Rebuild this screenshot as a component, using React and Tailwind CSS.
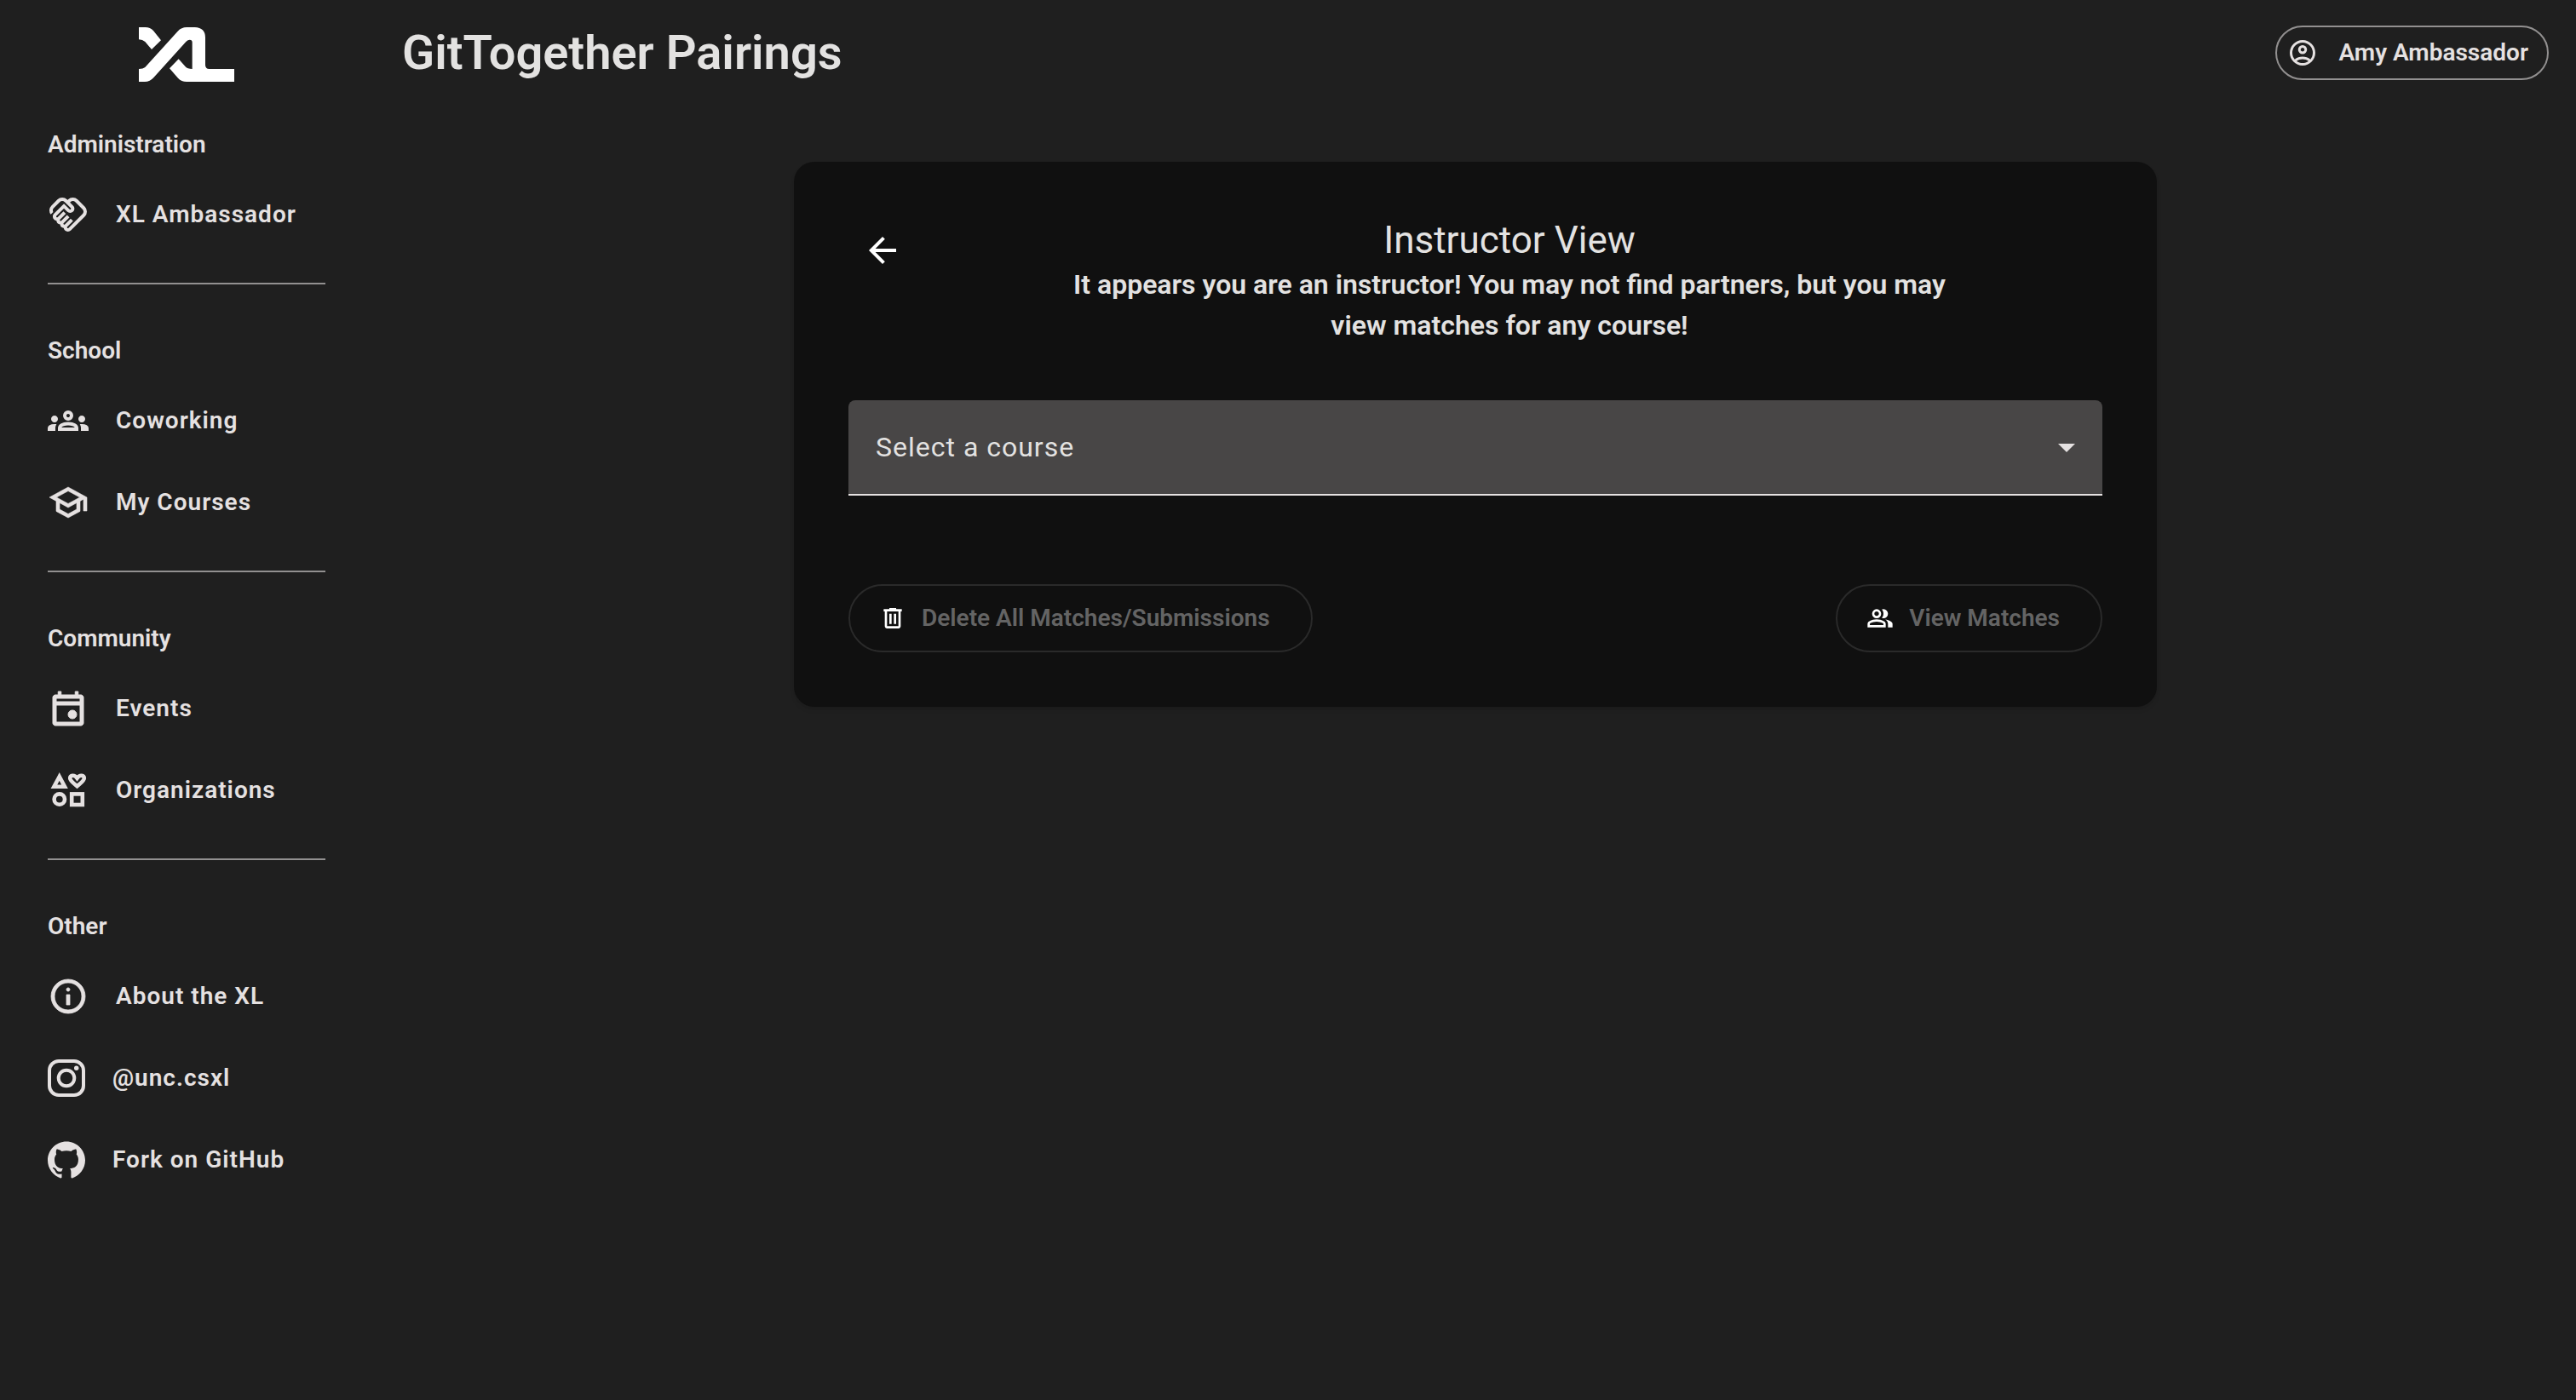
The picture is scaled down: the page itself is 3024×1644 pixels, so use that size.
import React from "react";
import { MdOutlineHandshake } from "react-icons/md";
import { SiGithub } from "react-icons/si";

const PATHS = {
  groups:
    "M0-240v-63q0-43 44-70t116-27q13 0 25 .5t23 2.5q-14 21-21 44t-7 48v65H0Zm240 0v-65q0-32 17.5-58.5T307-410q32-20 76.5-30t96.5-10q53 0 97.5 10t76.5 30q32 20 49 46.5t17 58.5v65H240Zm540 0v-65q0-26-6.5-49T754-397q11-2 22.5-2.5t23.5-.5q72 0 116 26.5t44 70.5v63H780Zm-455-80h311q-10-20-55.5-35T480-370q-55 0-100.5 15T325-320ZM160-440q-33 0-56.5-23.5T80-520q0-34 23.5-57t56.5-23q34 0 57 23t23 57q0 33-23 56.5T160-440Zm640 0q-33 0-56.5-23.5T720-520q0-34 23.5-57t56.5-23q34 0 57 23t23 57q0 33-23 56.5T800-440Zm-320-40q-50 0-85-35t-35-85q0-51 35-85.5t85-34.5q51 0 85.5 34.5T600-600q0 50-34.5 85T480-480Zm0-80q17 0 28.5-11.5T520-600q0-17-11.5-28.5T480-640q-17 0-28.5 11.5T440-600q0 17 11.5 28.5T480-560Z",
  school:
    "M480-120 200-272v-240L40-600l440-240 440 240v320h-80v-276l-80 44v240L480-120Zm0-332 274-148-274-148-274 148 274 148Zm0 241 200-108v-151L480-360 280-470v151l200 108Z",
  event:
    "M580-240q-42 0-71-29t-29-71q0-42 29-71t71-29q42 0 71 29t29 71q0 42-29 71t-71 29ZM180-80q-24 0-42-18t-18-42v-600q0-24 18-42t42-18h65v-80h70v80h330v-80h70v80h65q24 0 42 18t18 42v600q0 24-18 42t-42 18H180Zm20-80h560v-400H200v400Zm0-480h560v-80H200v80Z",
  info:
    "M440-280h80v-240h-80v240Zm40-320q17 0 28.5-11.5T520-640q0-17-11.5-28.5T480-680q-17 0-28.5 11.5T440-640q0 17 11.5 28.5T480-600Zm0 520q-83 0-156-31.5T197-197q-54-54-85.5-127T80-480q0-83 31.5-156T197-763q54-54 127-85.5T480-880q83 0 156 31.5T763-763q54 54 85.5 127T880-480q0 83-31.5 156T763-197q-54 54-127 85.5T480-80Zm0-80q134 0 227-93t93-227q0-134-93-227t-227-93q-134 0-227 93t-93 227q0 134 93 227t227 93Z",
  account:
    "M234-276q51-39 114-61.5T480-360q69 0 132 22.5T726-276q35-41 54.5-93T800-480q0-133-93.5-226.5T480-800q-133 0-226.5 93.5T160-480q0 59 19.5 111t54.5 93Zm246-164q-59 0-99.5-40.5T340-580q0-59 40.5-99.5T480-720q59 0 99.5 40.5T620-580q0 59-40.5 99.5T480-440Zm0 360q-83 0-156-31.5T197-197q-54-54-85.5-127T80-480q0-83 31.5-156T197-763q54-54 127-85.5T480-880q83 0 156 31.5T763-763q54 54 85.5 127T880-480q0 83-31.5 156T763-197q-54 54-127 85.5T480-80Zm0-80q53 0 100-15.5t86-44.5q-39-29-86-44.5T480-280q-53 0-100 15.5T294-220q39 29 86 44.5T480-160Zm0-360q26 0 43-17t17-43q0-26-17-43t-43-17q-26 0-43 17t-17 43q0 26 17 43t43 17Z",
  back: "m313-440 224 224-57 56-320-320 320-320 57 56-224 224h487v80H313Z",
  trash:
    "M280-120q-33 0-56.5-23.5T200-200v-520h-40v-80h200v-40h240v40h200v80h-40v520q0 33-23.5 56.5T680-120H280Zm400-600H280v520h400v-520ZM360-280h80v-360h-80v360Zm160 0h80v-360h-80v360Z",
  group:
    "M40-160v-112q0-34 17.5-62.5T104-378q62-31 126-46.5T360-440q66 0 130 15.5T616-378q29 15 46.5 43.5T680-272v112H40Zm720 0v-120q0-44-24.5-84.5T666-434q51 6 96 20.5t84 35.5q36 20 55 44.5t19 53.5v120H760ZM360-480q-66 0-113-47t-47-113q0-66 47-113t113-47q66 0 113 47t47 113q0 66-47 113t-113 47Zm400-160q0 66-47 113t-113 47q-11 0-28-2.5t-28-5.5q27-32 41.5-71t14.5-81q0-42-14.5-81T544-792q14-5 28-6.5t28-1.5q66 0 113 47t47 113ZM120-240h480v-32q0-11-5.5-20T580-306q-54-27-109-40.5T360-360q-56 0-111 13.5T140-306q-9 5-14.5 14t-5.5 20v32Zm240-320q33 0 56.5-23.5T440-640q0-33-23.5-56.5T360-720q-33 0-56.5 23.5T280-640q0 33 23.5 56.5T360-560Z",
};

function Symbol({ name, className, weight = 0 }) {
  return (
    <svg
      viewBox="0 -960 960 960"
      fill="currentColor"
      stroke="currentColor"
      strokeWidth={weight}
      aria-hidden="true"
      className={className}
    >
      <path d={PATHS[name]} />
    </svg>
  );
}

function InterestsIcon() {
  return (
    <svg viewBox="0 0 24 24" fill="none" stroke="currentColor" strokeWidth="2.3" aria-hidden="true" className="size-12 shrink-0">
      <path d="M6.85 4 3.7 9.9H10Z" />
      <path d="M17.25 9.6C15 7.7 13.1 6.4 13.1 5C13.1 3.2 15.6 2.6 17.25 4.9C18.9 2.6 21.4 3.2 21.4 5C21.4 6.4 19.5 7.7 17.25 9.6Z" />
      <circle cx="6.9" cy="17.3" r="3.1" />
      <rect x="14.1" y="14.2" width="6.3" height="6.3" />
    </svg>
  );
}

function InstagramIcon() {
  return (
    <svg viewBox="0 0 44 44" fill="none" stroke="currentColor" strokeWidth="4" aria-hidden="true" className="size-11 shrink-0">
      <rect x="2" y="2" width="40" height="40" rx="11" />
      <circle cx="22" cy="22" r="9.3" />
      <circle cx="33.7" cy="10.3" r="2.7" fill="currentColor" stroke="none" />
    </svg>
  );
}

function Logo() {
  return (
    <svg viewBox="0 0 336 192" fill="currentColor" role="img" aria-label="XL" className="h-16 w-28 text-white">
      <path d="M0 0H23Q40 0 51 12L78 46 45 78 22 51Q13 43 0 43Z" />
      <path d="M0 147Q15 147 22 141L137 14Q150 0 168 0H197Q234 2 234 36V133Q234 147 248 147H336V192H168Q150 192 138 179L108 145 140 112 164 139Q171 147 188 147V53Q188 44 179 44Q173 44 166 51L53 176Q39 192 21 192H0Z" />
    </svg>
  );
}

const SECTIONS = [
  {
    title: "Administration",
    items: [{ label: "XL Ambassador", icon: <MdOutlineHandshake className="size-12 shrink-0" /> }],
  },
  {
    title: "School",
    items: [
      { label: "Coworking", icon: <Symbol name="groups" className="size-12 shrink-0" /> },
      { label: "My Courses", icon: <Symbol name="school" weight={12} className="size-12 shrink-0" /> },
    ],
  },
  {
    title: "Community",
    items: [
      { label: "Events", icon: <Symbol name="event" weight={20} className="size-12 shrink-0" /> },
      { label: "Organizations", icon: <InterestsIcon /> },
    ],
  },
  {
    title: "Other",
    items: [
      { label: "About the XL", icon: <Symbol name="info" weight={16} className="size-12 shrink-0" /> },
      { label: "@unc.csxl", icon: <InstagramIcon /> },
      { label: "Fork on GitHub", icon: <SiGithub className="size-11 shrink-0" /> },
    ],
  },
];

function Sidebar() {
  return (
    <aside className="flex w-[440px] shrink-0 flex-col pr-[58px] pl-14 text-[28px] font-semibold text-[#e5e1e1]">
      <div className="flex h-32 items-center justify-center">
        <Logo />
      </div>
      <nav aria-label="Main" className="pt-[22px]">
        {SECTIONS.map((section) => (
          <section
            key={section.title}
            className="mb-[58px] border-b-2 border-[#929090] pb-8 last:mb-0 last:border-b-0"
          >
            <h2 className="leading-10">{section.title}</h2>
            <ul className="pt-[14px]">
              {section.items.map((item) => (
                <li key={item.label}>
                  <a href="#" className="flex h-24 items-center gap-8 tracking-[1px] whitespace-nowrap">
                    {item.icon}
                    {item.label}
                  </a>
                </li>
              ))}
            </ul>
          </section>
        ))}
      </nav>
    </aside>
  );
}

function ActionButton({ icon, children }) {
  return (
    <button
      type="button"
      disabled
      className="flex h-20 items-center gap-[18px] rounded-full border-2 border-[#2a2a2a] pr-12 pl-[34px] text-[28px] font-semibold whitespace-nowrap text-[#646464]"
    >
      <Symbol name={icon} className="size-8 shrink-0 text-white" />
      {children}
    </button>
  );
}

function InstructorCard() {
  return (
    <section className="w-full max-w-[1600px] rounded-3xl bg-[#101010] p-16 shadow-md">
      <div className="flex items-start">
        <button type="button" aria-label="Back" className="shrink-0 p-4 text-white">
          <Symbol name="back" className="size-12" />
        </button>
        <div className="flex-1 px-40 text-center text-[#e3e2e1]">
          <h2 className="text-[44px] leading-14">Instructor View</h2>
          <p className="text-[32px] leading-12 font-semibold">
            It appears you are an instructor! You may not find partners, but you may view matches for any course!
          </p>
        </div>
      </div>
      <div className="relative mt-16">
        <select
          aria-label="Select a course"
          defaultValue=""
          className="h-28 w-full appearance-none rounded-t-lg border-b-2 border-[#e5e1e1] bg-[#484646] px-8 text-[32px] tracking-[1px] text-[#e3e2e1]"
        >
          <option value="">Select a course</option>
        </select>
        <svg
          viewBox="0 0 20 10"
          fill="currentColor"
          aria-hidden="true"
          className="pointer-events-none absolute inset-y-0 right-8 my-auto h-[10px] w-5 text-[#e5e1e1]"
        >
          <path d="M0 0H20L10 10Z" />
        </svg>
      </div>
      <div className="mt-[104px] flex items-center justify-between">
        <ActionButton icon="trash">Delete All Matches/Submissions</ActionButton>
        <ActionButton icon="group">View Matches</ActionButton>
      </div>
    </section>
  );
}

export default function App() {
  return (
    <div className="flex min-h-screen bg-[#1f1f1f] font-['Roboto',sans-serif]">
      <Sidebar />
      <div className="flex min-w-0 flex-1 flex-col">
        <header className="flex h-[124px] items-center justify-between pr-8 pl-8">
          <h1 className="text-[56px] leading-16 font-semibold text-[#e3e2e1]">GitTogether Pairings</h1>
          <button
            type="button"
            className="flex h-16 items-center gap-6 rounded-full border-2 border-[#929090] pr-[22px] pl-3 text-[28px] font-semibold text-[#e5e1e1]"
          >
            <Symbol name="account" className="size-9 shrink-0" />
            Amy Ambassador
          </button>
        </header>
        <main className="flex justify-center pt-[66px]">
          <InstructorCard />
        </main>
      </div>
    </div>
  );
}
